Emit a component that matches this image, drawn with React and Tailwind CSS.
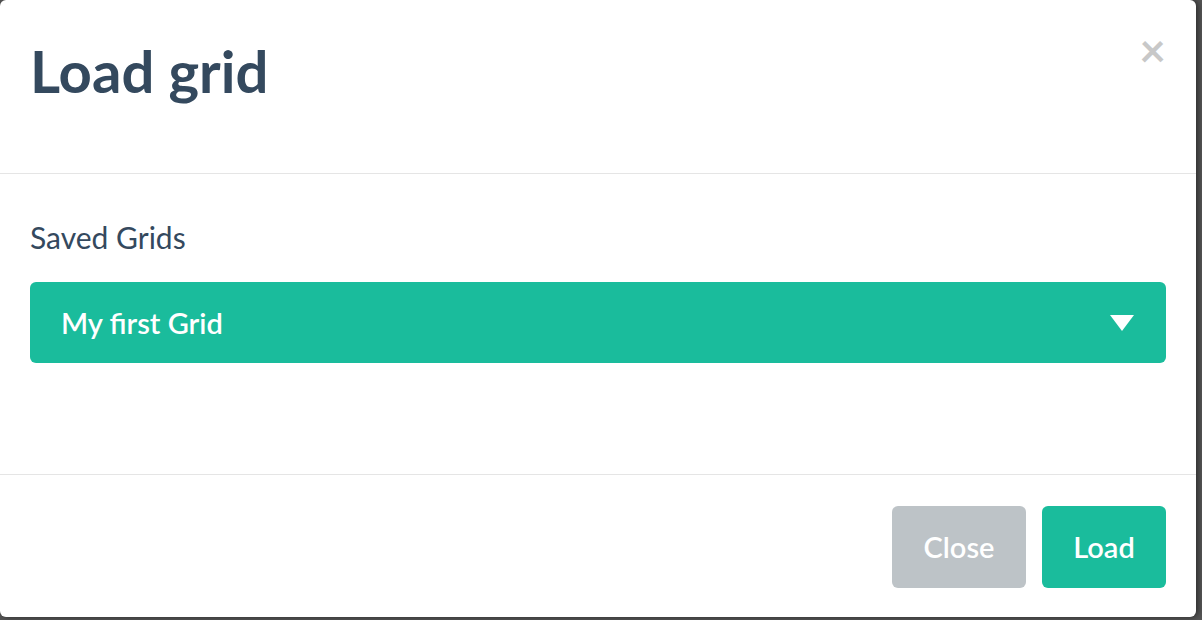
import { useState } from 'react';

const LoadGridModal = () => {
  const [grid, setGrid] = useState('My first Grid');

  return (
    <div className="w-[1196px] h-[617px] bg-white rounded-[6px] shadow-[2px_0_6px_rgba(0,0,0,0.5)] flex flex-col text-[#34495e]">
      {/* Header */}
      <div className="h-[174px] shrink-0 border-b border-[#e5e5e5] flex items-start justify-between pl-[30px] pr-[30px]">
        <h1 className="mt-[31px] text-[58px] leading-[80px] font-bold">Load grid</h1>
        <button className="mt-[30px] text-[#c8c8c8] text-[46px] leading-[40px] font-bold">×</button>
      </div>

      {/* Body */}
      <div className="flex-1 px-[30px] pt-[45px] border-b border-[#e5e5e5]">
        <label className="block text-[30px] leading-[36px]">Saved Grids</label>
        <div className="relative mt-[27px] h-[81px] rounded-[6px] bg-[#1abc9c] text-white flex items-center justify-between pl-[31px] pr-[32px]">
          <span className="text-[29px] font-semibold">{grid}</span>
          <svg width="24" height="16" viewBox="0 0 24 16">
            <path d="M0 0 H24 L12 16 Z" fill="#fff" />
          </svg>
          <select
            value={grid}
            onChange={(e) => setGrid(e.target.value)}
            className="absolute inset-0 opacity-0"
          >
            <option>My first Grid</option>
          </select>
        </div>
      </div>

      {/* Footer */}
      <div className="h-[142px] shrink-0 flex items-start justify-end gap-[16px] px-[30px] pt-[31px]">
        <button className="w-[134px] h-[82px] rounded-[6px] bg-[#bdc3c7] text-white text-[29px] font-semibold">
          Close
        </button>
        <button className="w-[124px] h-[82px] rounded-[6px] bg-[#1abc9c] text-white text-[29px] font-semibold">
          Load
        </button>
      </div>
    </div>
  );
};

export default function App() {
  return (
    <div className="w-[1202px] h-[620px] bg-[#555555] overflow-hidden" style={{ fontFamily: 'Lato, "Liberation Sans", sans-serif' }}>
      <LoadGridModal />
    </div>
  );
}
